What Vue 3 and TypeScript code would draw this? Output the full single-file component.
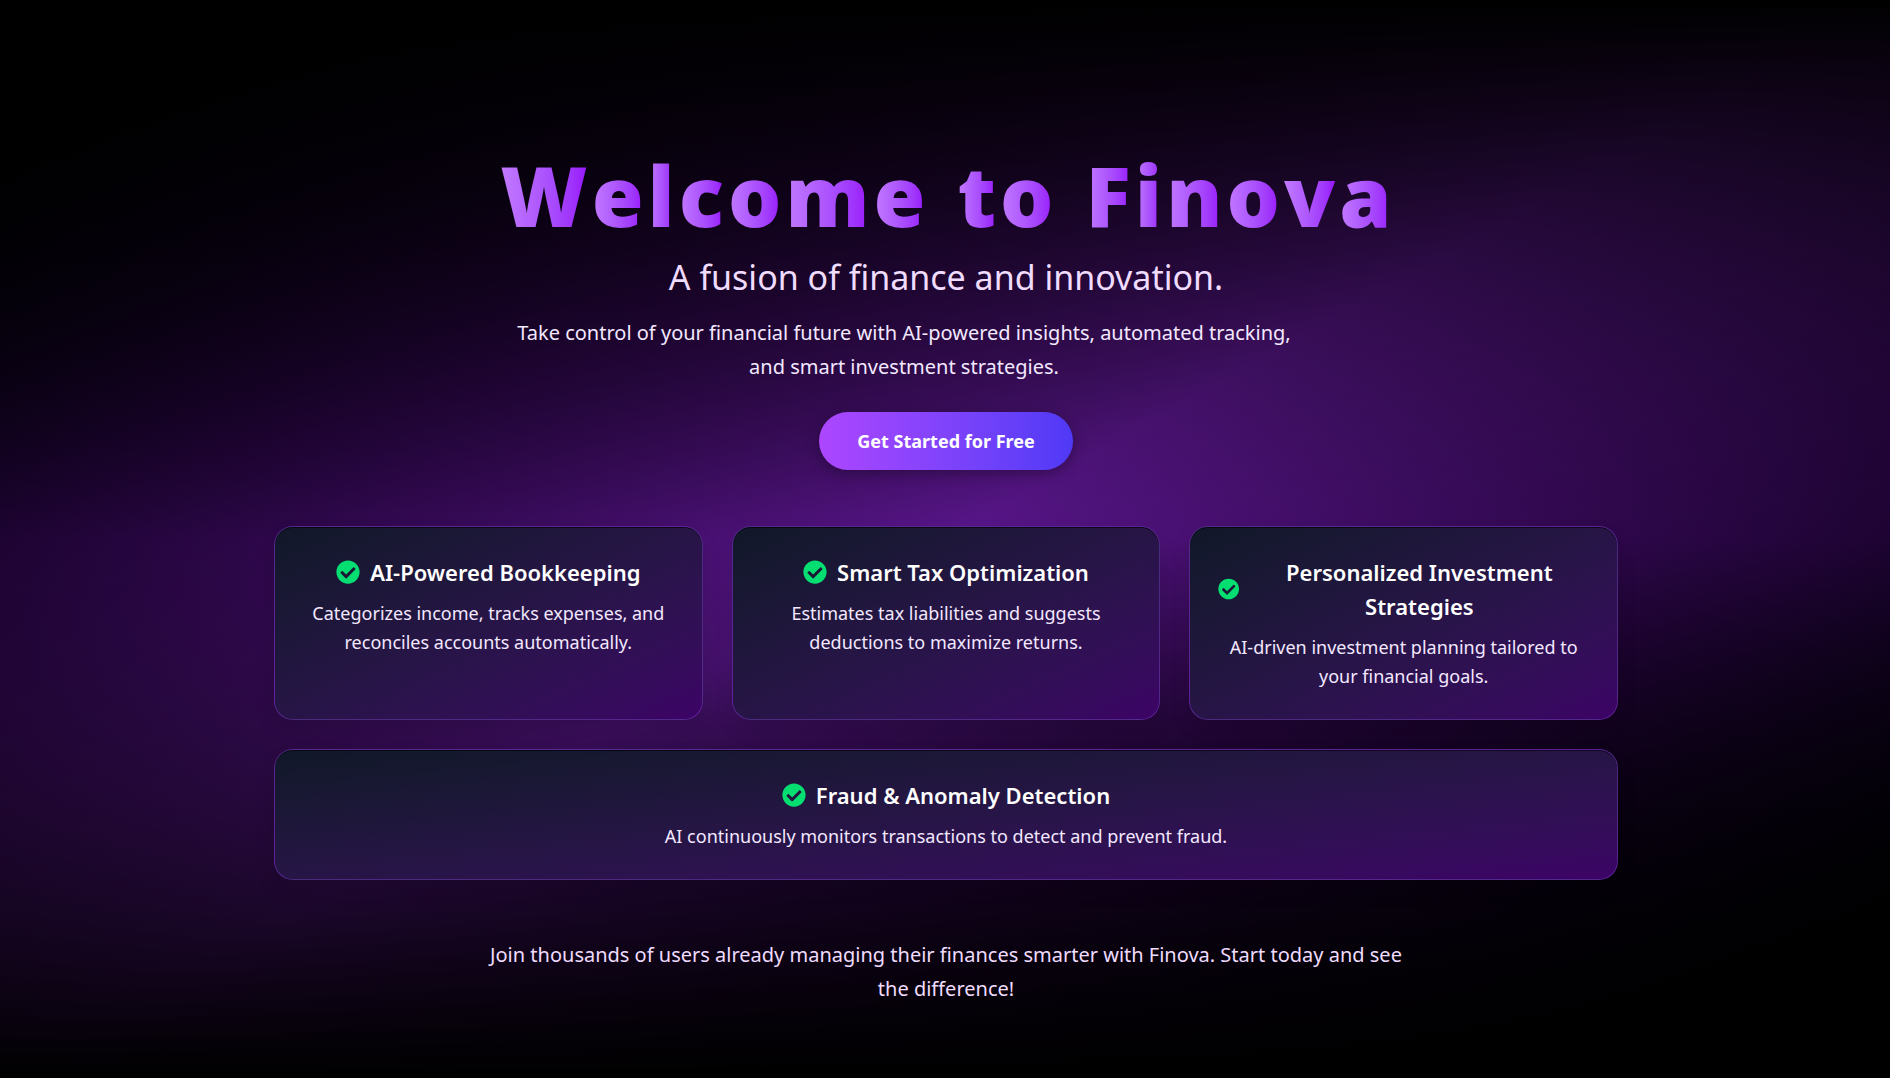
<script setup lang="ts">
interface Feature {
  title: string
  text: string
  wide?: boolean
}

const titleWords = ['Welcome', 'to', 'Finova']

const features: Feature[] = [
  { title: 'AI-Powered Bookkeeping', text: 'Categorizes income, tracks expenses, and reconciles accounts automatically.' },
  { title: 'Smart Tax Optimization', text: 'Estimates tax liabilities and suggests deductions to maximize returns.' },
  { title: 'Personalized Investment Strategies', text: 'AI-driven investment planning tailored to your financial goals.' },
  { title: 'Fraud & Anomaly Detection', text: 'AI continuously monitors transactions to detect and prevent fraud.', wide: true },
]
</script>

<template>
  <main class="page">
    <div class="content">
      <h1 class="title">
        <span v-for="word in titleWords" :key="word" class="word"><span v-for="(letter, i) in word" :key="i" class="letter">{{ letter }}</span></span>
      </h1>
      <h2 class="subtitle">A fusion of finance and innovation.</h2>
      <div class="intro-row">
        <p class="intro">Take control of your financial future with AI-powered insights, automated tracking, and smart investment strategies.</p>
      </div>
      <button type="button" class="cta">Get Started for Free</button>
      <section class="features">
        <article v-for="feature in features" :key="feature.title" class="card" :class="{ wide: feature.wide }">
          <h3 class="card-title">
            <svg class="check" viewBox="0 0 512 512" aria-hidden="true">
              <path d="M504 256c0 136.967-111.033 248-248 248S8 392.967 8 256 119.033 8 256 8s248 111.033 248 248zM227.314 387.314l184-184c6.248-6.248 6.248-16.379 0-22.627l-22.627-22.627c-6.248-6.249-16.379-6.249-22.628 0L216 308.118l-70.059-70.059c-6.248-6.248-16.379-6.248-22.628 0l-22.627 22.627c-6.248 6.248-6.248 16.379 0 22.627l104 104c6.249 6.249 16.379 6.249 22.628.001z" />
            </svg>
            <span>{{ feature.title }}</span>
          </h3>
          <p class="card-text">{{ feature.text }}</p>
        </article>
      </section>
      <p class="closing">Join thousands of users already managing their finances smarter with Finova. Start today and see the difference!</p>
    </div>
  </main>
</template>

<style>
body {
  margin: 0;
  background: #000;
}
</style>

<style scoped>
.page {
  box-sizing: border-box;
  min-height: 100vh;
  display: flex;
  justify-content: center;
  align-items: flex-start;
  padding: 147px 24px 64px 26px;
  background:
    linear-gradient(to bottom in oklab, #000, transparent, #000),
    linear-gradient(to bottom right in oklab, #000, #59168b, #000);
  color: #fff;
  font-family: "Segoe UI", "Noto Sans", "Open Sans", sans-serif;
  text-align: center;
}
.content {
  width: 100%;
  max-width: 1344px;
  display: flex;
  flex-direction: column;
  align-items: center;
}
.title {
  display: flex;
  justify-content: center;
  gap: 32px;
  margin: 0;
  font-size: 84px;
  line-height: 96px;
  font-weight: 900;
}
.word {
  display: flex;
  gap: 4px;
}
.letter {
  background: linear-gradient(to right in oklab, #c27aff, #9810fa);
  background-clip: text;
  -webkit-background-clip: text;
  color: transparent;
}
.subtitle {
  margin: 14px 0 0;
  color: #f0dcff;
  font-size: 34px;
  line-height: 40px;
  font-weight: 400;
}
.intro-row {
  width: 100%;
  max-width: 896px;
  margin-top: 19px;
}
.intro {
  max-width: 812px;
  margin: 0;
  color: #f3e8ff;
  font-size: 20px;
  line-height: 34px;
}
.cta {
  margin: 28px 0 0;
  padding: 16px 38px;
  border: 0;
  border-radius: 29px;
  background: linear-gradient(to right in oklab, #ad46ff, #4f39f6);
  box-shadow: 0 4px 14px rgba(0, 0, 0, 0.3);
  color: #fff;
  font-family: inherit;
  font-size: 18px;
  line-height: 26px;
  font-weight: 700;
  cursor: pointer;
}
.features {
  width: 100%;
  display: grid;
  grid-template-columns: repeat(3, 1fr);
  gap: 29px;
  margin-top: 56px;
}
.card {
  box-sizing: border-box;
  padding: 28px;
  border: 1px solid rgba(130, 60, 210, 0.5);
  border-radius: 19px;
  background: linear-gradient(to bottom right in oklab, #101828, #3c0366);
  box-shadow: 0 10px 20px rgba(0, 0, 0, 0.1), inset 0 1px 0 rgba(0, 0, 0, 0.6);
}
.wide {
  grid-column: 1 / -1;
}
.card-title {
  display: flex;
  justify-content: center;
  align-items: center;
  gap: 10px;
  margin: 0;
  font-size: 22px;
  line-height: 34px;
  font-weight: 600;
}
.check {
  width: 24px;
  height: 24px;
  fill: #05df72;
}
.card-text {
  margin: 10px 0 0;
  color: #f3e8ff;
  font-size: 18px;
  line-height: 29px;
}
.closing {
  max-width: 940px;
  margin: 58px 0 0;
  color: #f0dcff;
  font-size: 20px;
  line-height: 34px;
}
</style>
